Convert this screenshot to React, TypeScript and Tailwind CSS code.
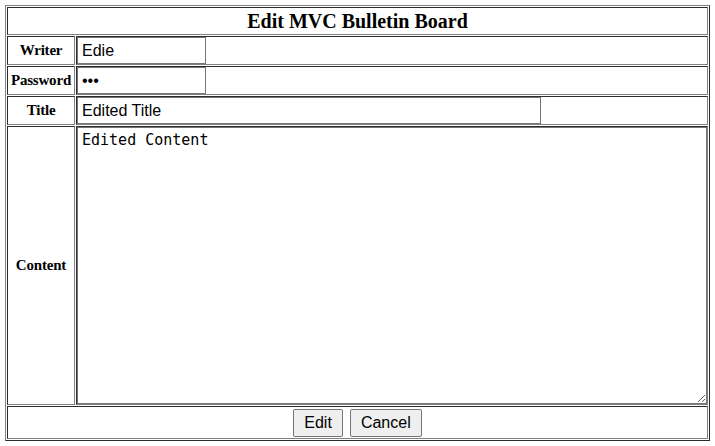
import React from 'react';

const cell = 'border border-[gray] [border-style:inset] p-0';
const label = `${cell} w-[68px] text-center text-[15px] font-black [font-family:'Liberation_Serif',serif] tracking-[-0.2px]`;
const field = 'border border-[#767676] bg-white px-[4px] text-black outline-none';
const sans = "text-[16px] [font-family:Arial,'Liberation_Sans',sans-serif]";

export default function App() {
    return (
        <div className="p-[5px] bg-white min-h-[446px]">
            <table className="w-[705px] border-separate border-spacing-[1px] border border-[gray] [border-style:outset]">
                <tbody>
                    <tr>
                        <td colSpan={2} className={`${cell} h-[28px] text-center text-[20px] font-black [font-family:'Liberation_Serif',serif] leading-[26px]`}>
                            Edit MVC Bulletin Board
                        </td>
                    </tr>
                    <tr>
                        <td className={label}>Writer</td>
                        <td className={cell}>
                            <input className={`${field} ${sans} block w-[129px] h-[27px]`} defaultValue="Edie" />
                        </td>
                    </tr>
                    <tr>
                        <td className={label}>Password</td>
                        <td className={cell}>
                            <input type="password" className={`${field} ${sans} block w-[129px] h-[27px]`} defaultValue="123" />
                        </td>
                    </tr>
                    <tr>
                        <td className={label}>Title</td>
                        <td className={cell}>
                            <input className={`${field} ${sans} block w-[464px] h-[27px]`} defaultValue="Edited Title" />
                        </td>
                    </tr>
                    <tr>
                        <td className={label}>Content</td>
                        <td className={cell}>
                            <textarea
                                className={`${field} block w-full h-[277px] resize py-[3px] px-[2px] text-[15px] leading-[18px] [font-family:'DejaVu_Sans_Mono',monospace]`}
                                defaultValue="Edited Content"
                            />
                        </td>
                    </tr>
                    <tr>
                        <td colSpan={2} className={`${cell} h-[33px] pt-[1px] text-center`}>
                            <button className={`${sans} h-[28px] px-[10px] mr-[7px] bg-[#efefef] border border-[#767676] rounded-[2px] align-middle`}>
                                Edit
                            </button>
                            <button className={`${sans} h-[28px] px-[10px] bg-[#efefef] border border-[#767676] rounded-[2px] align-middle`}>
                                Cancel
                            </button>
                        </td>
                    </tr>
                </tbody>
            </table>
        </div>
    );
}
